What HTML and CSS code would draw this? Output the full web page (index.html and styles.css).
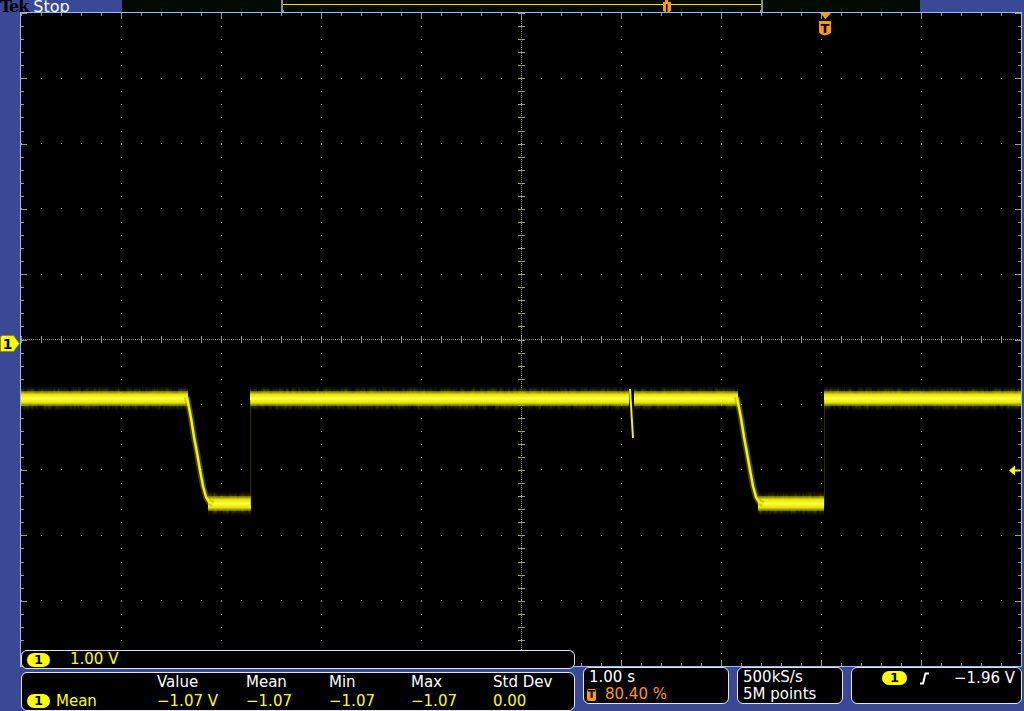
FILE: index.html
```html
<!DOCTYPE html>
<html lang="en">
<head>
  <meta charset="UTF-8">
  <title>Tek Scope Capture</title>
  <link rel="stylesheet" href="styles.css">
</head>
<body>
<div class="scope">
  <div class="topbar">
    <div class="status"><span class="tek">Tek</span><span class="run-state">Stop</span></div>
    <div class="record-view">
      <svg width="798" height="12" viewBox="122 0 798 12">
        <rect x="283" y="4" width="478" height="1" fill="#e6e600"/>
        <g fill="#8e8e8e">
          <rect x="281" y="0" width="2" height="12"/>
          <rect x="281" y="10" width="3" height="2"/>
          <rect x="761" y="0" width="2" height="12"/>
          <rect x="760" y="10" width="3" height="2"/>
        </g>
        <g fill="#ff9a00">
          <rect x="665" y="0" width="3" height="3"/>
          <path d="M663,2 H671 V10 Q671,12 667,12 Q663,12 663,10 Z"/>
        </g>
        <rect x="666" y="4" width="1.5" height="8" fill="#000"/>
      </svg>
    </div>
    <div class="topbar-end"></div>
  </div>

  <div class="display">
    <div class="left-rail">
      <svg class="ch-marker" width="20" height="17" viewBox="0 0 20 17">
        <polygon points="0.5,2 2,0.5 13.5,0.5 19.5,8.5 13.5,16.5 0.5,16.5" fill="#ffff00" stroke="#8c8c00"/>
        <text x="7.5" y="14" font-family="DejaVu Sans, sans-serif" font-size="14" font-weight="bold" text-anchor="middle" fill="#000">1</text>
      </svg>
    </div>
    <div class="graticule">
      <svg width="1000" height="653" viewBox="21 13 1000 653">
        <defs>
          <linearGradient id="fringe" x1="0" y1="0" x2="0" y2="1">
            <stop offset="0" stop-color="#3a3a00" stop-opacity="0"/>
            <stop offset="0.2" stop-color="#505000"/>
            <stop offset="0.5" stop-color="#747400"/>
            <stop offset="0.8" stop-color="#505000"/>
            <stop offset="1" stop-color="#3a3a00" stop-opacity="0"/>
          </linearGradient>
          <linearGradient id="core" x1="0" y1="0" x2="0" y2="1">
            <stop offset="0" stop-color="#a8a800" stop-opacity="0.5"/>
            <stop offset="0.22" stop-color="#e4e400"/>
            <stop offset="0.5" stop-color="#ffff40"/>
            <stop offset="0.78" stop-color="#e4e400"/>
            <stop offset="1" stop-color="#a8a800" stop-opacity="0.5"/>
          </linearGradient>
          <filter id="streak" filterUnits="userSpaceOnUse" x="21" y="380" width="1000" height="145">
            <feTurbulence type="fractalNoise" baseFrequency="0.35 0.06" numOctaves="2" seed="7" result="noise"/>
            <feColorMatrix in="noise" type="matrix" values="0 0 0 0 1  0 0 0 0 1  0 0 0 0 1  1.4 0 0 0 -0.15" result="mask"/>
            <feComposite in="SourceGraphic" in2="mask" operator="in"/>
          </filter>
        </defs>

        <!-- graticule -->
        <g stroke="#9a9888" stroke-width="1" fill="none" shape-rendering="crispEdges">
          <g stroke-dasharray="1 19">
            <line x1="21" y1="78.5" x2="1021" y2="78.5"/>
            <line x1="21" y1="143.5" x2="1021" y2="143.5"/>
            <line x1="21" y1="208.5" x2="1021" y2="208.5"/>
            <line x1="21" y1="274.5" x2="1021" y2="274.5"/>
            <line x1="21" y1="404.5" x2="1021" y2="404.5"/>
            <line x1="21" y1="469.5" x2="1021" y2="469.5"/>
            <line x1="21" y1="535.5" x2="1021" y2="535.5"/>
            <line x1="21" y1="600.5" x2="1021" y2="600.5"/>
          </g>
          <g stroke-dasharray="1 12.06">
            <line x1="121.5" y1="13" x2="121.5" y2="666"/>
            <line x1="221.5" y1="13" x2="221.5" y2="666"/>
            <line x1="321.5" y1="13" x2="321.5" y2="666"/>
            <line x1="421.5" y1="13" x2="421.5" y2="666"/>
            <line x1="621.5" y1="13" x2="621.5" y2="666"/>
            <line x1="721.5" y1="13" x2="721.5" y2="666"/>
            <line x1="821.5" y1="13" x2="821.5" y2="666"/>
            <line x1="921.5" y1="13" x2="921.5" y2="666"/>
          </g>
          <!-- centre crosshair -->
          <g stroke-dasharray="1 1">
            <line x1="21" y1="339.5" x2="1021" y2="339.5"/>
            <line x1="521.5" y1="13" x2="521.5" y2="666"/>
          </g>
          <line x1="21" y1="339.5" x2="1021" y2="339.5" stroke-width="7" stroke-dasharray="1 19"/>
          <line x1="521.5" y1="13" x2="521.5" y2="666" stroke-width="7" stroke-dasharray="1 12.06"/>
          <!-- edge ticks -->
          <line x1="21" y1="14.5" x2="1021" y2="14.5" stroke-width="3" stroke-dasharray="1 19"/>
          <line x1="121" y1="16" x2="1021" y2="16" stroke-width="6" stroke-dasharray="1 99"/>
          <line x1="21" y1="664.5" x2="1021" y2="664.5" stroke-width="3" stroke-dasharray="1 19"/>
          <line x1="121" y1="663" x2="1021" y2="663" stroke-width="6" stroke-dasharray="1 99"/>
          <line x1="22.5" y1="13" x2="22.5" y2="666" stroke-width="3" stroke-dasharray="1 12.06"/>
          <line x1="24" y1="13" x2="24" y2="666" stroke-width="6" stroke-dasharray="1 64.3"/>
          <line x1="1019.5" y1="13" x2="1019.5" y2="666" stroke-width="3" stroke-dasharray="1 12.06"/>
          <line x1="1018" y1="13" x2="1018" y2="666" stroke-width="6" stroke-dasharray="1 64.3"/>
        </g>

        <!-- channel 1 trace: noisy fringe, then bright core -->
        <g fill="url(#fringe)" filter="url(#streak)">
          <rect x="21" y="386" width="167" height="25"/>
          <rect x="250" y="386" width="379" height="25"/>
          <rect x="634" y="386" width="104" height="25"/>
          <rect x="824" y="386" width="197" height="25"/>
          <rect x="208" y="491" width="43" height="25"/>
          <rect x="758" y="491" width="66" height="25"/>
        </g>
        <g fill="url(#core)">
          <rect x="21" y="391" width="167" height="15"/>
          <rect x="250" y="391" width="379" height="15"/>
          <rect x="634" y="391" width="104" height="15"/>
          <rect x="824" y="391" width="197" height="15"/>
          <rect x="208" y="496" width="43" height="15"/>
          <rect x="758" y="496" width="66" height="15"/>
        </g>
        <g fill="none" stroke-linejoin="round">
          <g stroke="#9a9a00" stroke-opacity="0.45" stroke-width="6">
            <polyline points="187,397 191,418 194,437 197,453 200,470 203,486 206,497 209,502 213,504"/>
            <polyline points="737,397 741,418 744,437 747,453 750,470 753,486 756,497 759,502 763,504"/>
          </g>
          <g stroke="#f4f400" stroke-width="2.5">
            <polyline points="187,397 191,418 194,437 197,453 200,470 203,486 206,497 209,502 213,504"/>
            <polyline points="737,397 741,418 744,437 747,453 750,470 753,486 756,497 759,502 763,504"/>
            <line x1="630" y1="389" x2="633" y2="438" stroke-width="2"/>
          </g>
          <g stroke="#8a8a00" stroke-opacity="0.35" stroke-width="1">
            <line x1="250.5" y1="400" x2="250.5" y2="506"/>
            <line x1="824.5" y1="400" x2="824.5" y2="506"/>
          </g>
        </g>

        <!-- trigger position -->
        <g fill="#ff9a00">
          <polygon points="820,13 831,13 825.5,19"/>
          <path d="M819,21 H831 V32 Q831,34 825,35.5 Q819,34 819,32 Z"/>
        </g>
        <text x="825" y="33" font-family="DejaVu Sans, sans-serif" font-size="13" font-weight="bold" text-anchor="middle" fill="#000">T</text>

        <!-- trigger level -->
        <g fill="#ffff00">
          <polygon points="1009,470.5 1015,465.5 1015,475.5"/>
          <rect x="1015" y="469.5" width="5" height="2"/>
        </g>
      </svg>
    </div>
  </div>

  <div class="readouts">
    <div class="readouts-left">
      <div class="panel vertical">
        <span class="badge">1</span>
        <span class="yellow">1.00 V</span>
      </div>
      <div class="panel measure">
        <span></span>
        <span>Value</span>
        <span>Mean</span>
        <span>Min</span>
        <span>Max</span>
        <span>Std Dev</span>
        <span class="yellow meas-name"><span class="badge">1</span>Mean</span>
        <span class="yellow">&minus;1.07 V</span>
        <span class="yellow">&minus;1.07</span>
        <span class="yellow">&minus;1.07</span>
        <span class="yellow">&minus;1.07</span>
        <span class="yellow">0.00</span>
      </div>
    </div>
    <div class="panel horizontal">
      <div class="line">1.00 s</div>
      <div class="line orange trig-pos"><span class="t-badge">T</span>80.40 %</div>
    </div>
    <div class="panel acquire">
      <div class="line">500kS/s</div>
      <div class="line">5M points</div>
    </div>
    <div class="panel trigger">
      <span class="badge">1</span>
      <svg class="edge" width="10" height="13" viewBox="0 0 10 13">
        <polyline points="0,11.5 3,11.5 5.5,1.5 9,1.5" fill="none" stroke="#fff" stroke-width="2"/>
      </svg>
      <span>&minus;1.96 V</span>
    </div>
  </div>
</div>
</body>
</html>
```

FILE: styles.css
```css
* {
  margin: 0;
  padding: 0;
  box-sizing: border-box;
}

body {
  width: 1024px;
  height: 711px;
  overflow: hidden;
  background: #3a4996;
  color: #ffffff;
  font-family: "DejaVu Sans", sans-serif;
  font-size: 15px;
}

svg {
  display: block;
}

.scope {
  display: flex;
  flex-direction: column;
  height: 711px;
}

/* Top status strip */
.topbar {
  display: flex;
  height: 12px;
}

.status {
  width: 122px;
  display: flex;
  gap: 5px;
  font-size: 16px;
  line-height: 13px;
  overflow: hidden;
  white-space: nowrap;
}

.status .tek {
  font-family: "DejaVu Serif", serif;
  font-weight: bold;
  font-size: 16px;
  letter-spacing: -1px;
  color: #000000;
}

.status .run-state {
  color: #ffffff;
}

.record-view {
  width: 798px;
  background: #000b00;
}

.topbar-end {
  flex: 1;
}

/* Waveform display */
.display {
  display: flex;
  height: 655px;
}

.left-rail {
  width: 20px;
  position: relative;
}

.ch-marker {
  position: absolute;
  left: 0;
  top: 323px;
}

.graticule {
  width: 1002px;
  border: 1px solid #9cb9f2;
  background: #000000;
}

/* Readouts along the bottom */
.readouts {
  position: relative;
  display: flex;
  align-items: flex-start;
  gap: 8px;
  margin-top: -17px;
  padding-left: 21px;
}

.readouts-left {
  width: 554px;
  display: flex;
  flex-direction: column;
  gap: 3px;
}

.panel {
  background: #000000;
  border: 1px solid #e4e4ec;
  border-radius: 6px;
}

.yellow {
  color: #ffff00;
}

.orange {
  color: #ff9a00;
}

.badge {
  display: inline-block;
  width: 23px;
  height: 14px;
  border-radius: 7px;
  background: #ffff00;
  color: #000000;
  font-size: 13px;
  font-weight: bold;
  line-height: 14px;
  text-align: center;
}

.panel.vertical {
  height: 19px;
  display: flex;
  align-items: center;
  gap: 20px;
  padding-left: 5px;
  line-height: 17px;
}

.panel.measure {
  height: 39px;
  display: grid;
  grid-template-columns: 130px 89px 83px 82px 82px auto;
  padding-left: 5px;
  line-height: 18px;
  white-space: nowrap;
}

.meas-name {
  display: flex;
  align-items: center;
  gap: 6px;
}

.panel.horizontal,
.panel.acquire {
  margin-top: 17px;
  height: 37px;
  padding: 1px 0 0 5px;
  line-height: 17px;
  white-space: nowrap;
}

.panel.horizontal {
  width: 146px;
}

.panel.acquire {
  width: 106px;
}

.trig-pos {
  display: flex;
  align-items: center;
  margin-left: -2px;
}

.t-badge {
  width: 9px;
  height: 12px;
  margin-right: 9px;
  border-radius: 2px;
  background: #ff9a00;
  color: #000000;
  font-size: 11px;
  font-weight: bold;
  line-height: 12px;
  text-align: center;
}

.panel.trigger {
  margin-top: 17px;
  width: 171px;
  height: 37px;
  display: flex;
  align-items: flex-start;
  padding: 3px 0 0 30px;
  line-height: 15px;
}

.panel.trigger .badge {
  width: 25px;
}

.panel.trigger .edge {
  margin: 1px 0 0 13px;
}

.panel.trigger span:last-child {
  margin-left: 24px;
}
```
